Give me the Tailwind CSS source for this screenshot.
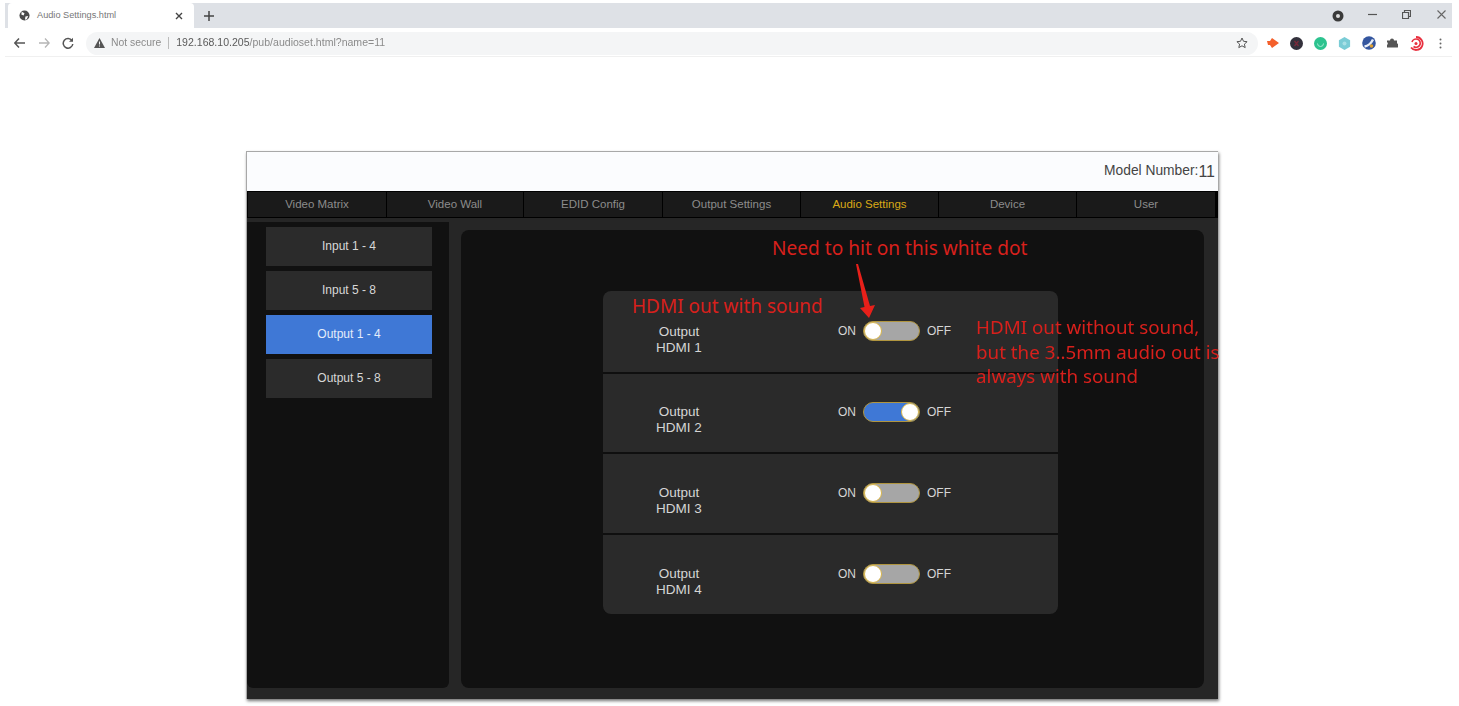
<!DOCTYPE html>
<html lang="en">
<head>
    <meta charset="UTF-8">
    <title>Audio Settings.html</title>
    <script src="https://cdn.jsdelivr.net/npm/@tailwindcss/browser@4"></script>
</head>
<body class="bg-white font-['Liberation_Sans',sans-serif]">
<div class="relative w-[1459px] h-[706px] overflow-hidden blur-[0.5px]">

    <!-- Browser chrome -->
    <div class="pt-[3px] pl-[5px] w-[1452px]">
        <div class="flex items-center h-[25px] bg-[#dee1e6]">
            <div class="flex items-center w-[186px] h-[25px] ml-[3px] pl-[11px] bg-white rounded-t-[4px]">
                <svg class="w-[11px] h-[11px]" viewBox="0 0 12 12"><circle cx="6" cy="6" r="5.500" fill="#4a4a4a"/><path d="M3 2l3 1.500-1 2.500-2.500-1zM7 7l3-.5-1.500 3.500-2 .5z" fill="#fff"/></svg>
                <span class="ml-[7px] w-[138px] text-[9.200px] text-[#777]">Audio Settings.html</span>
                <svg class="w-[8px] h-[8px]" viewBox="0 0 8 8"><path d="M1 1l6 6M7 1l-6 6" stroke="#444" stroke-width="1.400"/></svg>
            </div>
            <svg class="ml-[10px] w-[10px] h-[10px]" viewBox="0 0 10 10"><path d="M5 0v10M0 5h10" stroke="#444" stroke-width="1.500"/></svg>
            <svg class="ml-[1118px] w-[12px] h-[12px]" viewBox="0 0 12 12"><circle cx="6" cy="6" r="5.500" fill="#3a3a3a"/><circle cx="6" cy="6" r="2" fill="#ddd"/></svg>
            <svg class="ml-[24px] w-[9px] h-[9px] -mt-[3px]" viewBox="0 0 9 9"><path d="M0 4.500h9" stroke="#555" stroke-width="1.200"/></svg>
            <svg class="ml-[25px] w-[9px] h-[9px] -mt-[3px]" viewBox="0 0 9 9"><path d="M.5 2.500h6v6h-6zM2.500 2.500v-2h6v6h-2" fill="none" stroke="#555" stroke-width="1.200"/></svg>
            <svg class="ml-[26px] w-[9px] h-[9px] -mt-[3px]" viewBox="0 0 9 9"><path d="M.5.5l8 8M8.500.5l-8 8" stroke="#666" stroke-width="1.100"/></svg>
        </div>
        <div class="flex items-center h-[29px] pt-[2px] border-b border-[#f0f0f0]">
            <svg class="ml-[9px] w-[11px] h-[10px]" viewBox="0 0 11 10"><path d="M5 .5L.8 5 5 9.500M1 5h10" fill="none" stroke="#555" stroke-width="1.500"/></svg>
            <svg class="ml-[14px] w-[11px] h-[10px]" viewBox="0 0 11 10"><path d="M6 .5L10.200 5 6 9.500M10 5H0" fill="none" stroke="#b5b5b5" stroke-width="1.300"/></svg>
            <svg class="ml-[12px] w-[12px] h-[12px]" viewBox="0 0 12 12"><path d="M10 3.600A4.800 4.800 0 1 0 10.800 7" fill="none" stroke="#555" stroke-width="1.500"/><path d="M11 .8v4H7z" fill="#555"/></svg>
            <div class="flex items-center ml-[12px] w-[1172px] h-[23px] pl-[8px] bg-[#f4f5f6] rounded-full">
                <svg class="w-[11px] h-[10px]" viewBox="0 0 11 10"><path d="M5.500 0L11 10H0z" fill="#555"/><path d="M5.500 3.500v3M5.500 7.500v1" stroke="#f4f5f6" stroke-width="1"/></svg>
                <span class="ml-[6px] text-[10.400px] text-[#8b8b8b]">Not secure</span>
                <span class="ml-[7px] w-px h-[12px] bg-[#bbbbbb]"></span>
                <span class="ml-[7px] text-[10.550px] text-[#5a5a5a]">192.168.10.205<span class="text-[#8b8b8b]">/pub/audioset.html?name=11</span></span>
                <svg class="ml-auto mr-[10px] w-[12px] h-[12px]" viewBox="0 0 12 12"><path d="M6 1l1.500 3.300 3.600.4-2.700 2.400.8 3.500L6 8.800l-3.200 1.800.8-3.500L.9 4.700l3.600-.4z" fill="none" stroke="#555" stroke-width="1"/></svg>
            </div>
            <svg class="ml-[8px] w-[13px] h-[12px]" viewBox="0 0 13 12"><path d="M1 4h3l2-3 7 5-7 5-2-3H2z" fill="#f4602c"/></svg>
            <svg class="ml-[11px] w-[13px] h-[13px]" viewBox="0 0 13 13"><circle cx="6.500" cy="6.500" r="6.500" fill="#33313c"/><path d="M4.500 4l4 5M8.500 4l-4 5" stroke="#7a2a3a" stroke-width="1.300"/></svg>
            <svg class="ml-[11px] w-[13px] h-[13px]" viewBox="0 0 13 13"><circle cx="6.500" cy="6.500" r="6.500" fill="#2cc38f"/><path d="M3.500 6.500a3 3 0 0 0 6 0" fill="none" stroke="#a8ecd4" stroke-width="1"/></svg>
            <svg class="ml-[11px] w-[13px] h-[13px]" viewBox="0 0 13 13"><path d="M6.500 0l5.600 3.200v6.600L6.500 13 .9 9.800V3.200z" fill="#7accd6"/><circle cx="6.500" cy="6.500" r="2" fill="#a8e0e6"/></svg>
            <svg class="ml-[11px] w-[14px] h-[14px]" viewBox="0 0 14 14"><circle cx="7" cy="7" r="6.800" fill="#34569f"/><path d="M2.500 10.500C6 10 9 7.500 11 3.500" stroke="#e8eef8" stroke-width="2.400" fill="none"/><circle cx="9.500" cy="10" r="1.800" fill="#e0a030"/></svg>
            <svg class="ml-[10px] w-[12px] h-[12px]" viewBox="0 0 12 12"><path d="M1 3.500h3a2 2 0 0 1 4 0h3v3a2 2 0 0 1 0 4H1V8a1.800 1.800 0 0 0 0-3z" fill="#555"/></svg>
            <svg class="ml-[11px] w-[15px] h-[15px]" viewBox="0 0 15 15"><path d="M7 1a6.500 6.500 0 1 1-5 10.500" fill="none" stroke="#e8303f" stroke-width="1.800"/><path d="M3 6a4.200 4.200 0 1 1 1.500 4.500" fill="none" stroke="#e8303f" stroke-width="1.600"/><circle cx="7" cy="7.500" r="1.500" fill="#e8303f"/></svg>
            <svg class="ml-[15px] w-[3px] h-[11px]" viewBox="0 0 3 11"><circle cx="1.500" cy="1.500" r="1" fill="#666"/><circle cx="1.500" cy="5.500" r="1" fill="#666"/><circle cx="1.500" cy="9.500" r="1" fill="#666"/></svg>
        </div>
    </div>

    <!-- Device panel -->
    <div class="flex flex-col w-[972px] h-[548px] mt-[94px] ml-[246px] border-t border-l border-[#a8a8a8] shadow-[1px_2px_3px_rgba(0,0,0,0.55)]">
        <div class="flex justify-end items-center shrink-0 h-[39px] pr-[3px] bg-[#fbfcfe] text-[13.800px] text-[#444]">
            Model Number:<span class="text-[16px]">11</span>
        </div>
        <div class="flex shrink-0 h-[27px] pt-[1px] pb-[1px] pl-[1px] pr-[2px] gap-px bg-black text-[11.500px] text-[#8c8c8c]">
            <div class="flex items-center justify-center w-[138px] bg-[#1a1a1a]">Video Matrix</div>
            <div class="flex items-center justify-center w-[136px] bg-[#1a1a1a]">Video Wall</div>
            <div class="flex items-center justify-center w-[138px] bg-[#1a1a1a]">EDID Config</div>
            <div class="flex items-center justify-center w-[137px] bg-[#1a1a1a]">Output Settings</div>
            <div class="flex items-center justify-center w-[137px] bg-[#1a1a1a] text-[#d9a916]">Audio Settings</div>
            <div class="flex items-center justify-center w-[137px] bg-[#1a1a1a]">Device</div>
            <div class="flex items-center justify-center w-[138px] bg-[#1a1a1a]">User</div>
        </div>
        <div class="flex flex-1 min-h-0 bg-[#262626]">
            <!-- Sidebar -->
            <div class="flex flex-col gap-[5px] w-[202px] mt-[4px] mb-[11px] pt-[5px] pl-[19px] bg-[#111111] rounded-b-[6px] text-[12px] text-[#d8d8d8]">
                <div class="flex items-center justify-center w-[166px] h-[39px] pb-[2px] bg-[#2b2b2b]">Input 1 - 4</div>
                <div class="flex items-center justify-center w-[166px] h-[39px] pb-[2px] bg-[#2b2b2b]">Input 5 - 8</div>
                <div class="flex items-center justify-center w-[166px] h-[39px] pb-[2px] bg-[#3f78d6] text-[#e4ecfa]">Output 1 - 4</div>
                <div class="flex items-center justify-center w-[166px] h-[39px] pb-[2px] bg-[#2b2b2b]">Output 5 - 8</div>
            </div>
            <!-- Main -->
            <div class="w-[743px] ml-[12px] mt-[12px] mb-[11px] pt-[61px] pl-[142px] bg-[#111111] rounded-[8px]">
                <div class="flex flex-col gap-[2px] w-[455px] h-[323px] bg-[#0f0f0f] rounded-[8px] overflow-hidden text-[#d5d5d5]">
                    <div class="flex items-start h-[81px] pt-[33px] bg-[#2a2a2a]">
                        <div class="w-[152px] text-center text-[13.500px] leading-[16px]">Output<br>HDMI 1</div>
                        <div class="flex items-center h-[16px] -mt-[1px] ml-[83px] text-[12px]">
                            <span class="w-[25px]">ON</span>
                            <div class="flex items-center w-[57px] h-[20px] bg-[#a6a6a6] border border-[#b0953f] rounded-full">
                                <span class="w-[18px] h-[18px] bg-white border border-[#d9b64a] rounded-full"></span>
                            </div>
                            <span class="ml-[7px]">OFF</span>
                        </div>
                    </div>
                    <div class="flex items-start h-[78px] pt-[30px] bg-[#2a2a2a]">
                        <div class="w-[152px] text-center text-[13.500px] leading-[16px]">Output<br>HDMI 2</div>
                        <div class="flex items-center h-[16px] ml-[83px] text-[12px]">
                            <span class="w-[25px]">ON</span>
                            <div class="flex items-center justify-end w-[57px] h-[20px] bg-[#3f78d6] border border-[#b0953f] rounded-full">
                                <span class="w-[18px] h-[18px] bg-white border border-[#d9b64a] rounded-full"></span>
                            </div>
                            <span class="ml-[7px]">OFF</span>
                        </div>
                    </div>
                    <div class="flex items-start h-[79px] pt-[31px] bg-[#2a2a2a]">
                        <div class="w-[152px] text-center text-[13.500px] leading-[16px]">Output<br>HDMI 3</div>
                        <div class="flex items-center h-[16px] ml-[83px] text-[12px]">
                            <span class="w-[25px]">ON</span>
                            <div class="flex items-center w-[57px] h-[20px] bg-[#a6a6a6] border border-[#b0953f] rounded-full">
                                <span class="w-[18px] h-[18px] bg-white border border-[#d9b64a] rounded-full"></span>
                            </div>
                            <span class="ml-[7px]">OFF</span>
                        </div>
                    </div>
                    <div class="flex items-start h-[79px] pt-[31px] bg-[#2a2a2a]">
                        <div class="w-[152px] text-center text-[13.500px] leading-[16px]">Output<br>HDMI 4</div>
                        <div class="flex items-center h-[16px] ml-[83px] text-[12px]">
                            <span class="w-[25px]">ON</span>
                            <div class="flex items-center w-[57px] h-[20px] bg-[#a6a6a6] border border-[#b0953f] rounded-full">
                                <span class="w-[18px] h-[18px] bg-white border border-[#d9b64a] rounded-full"></span>
                            </div>
                            <span class="ml-[7px]">OFF</span>
                        </div>
                    </div>
                </div>
            </div>
        </div>
    </div>

    <!-- Red annotations over the screenshot -->
    <p class="absolute left-[772px] top-[236px] font-['Noto_Sans',sans-serif] text-[19.100px] leading-[24px] whitespace-nowrap text-[#d8201c]">Need to hit on this white dot</p>
    <p class="absolute left-[632px] top-[294px] font-['Noto_Sans',sans-serif] text-[19px] leading-[24px] whitespace-nowrap text-[#d8201c]">HDMI out with sound</p>
    <p class="absolute left-[976px] top-[315px] font-['Noto_Sans',sans-serif] text-[18.800px] leading-[24.500px] whitespace-nowrap text-[#d8201c]">HDMI out without sound,<br>but the 3..5mm audio out is<br>always with sound</p>
    <svg class="absolute left-[850px] top-[262px]" width="30" height="60" viewBox="0 0 30 60"><path d="M6 2L8 2 20 44 25 43 19 56 10 46 14.500 45z" fill="#e8201a"/></svg>
</div>
</body>
</html>
